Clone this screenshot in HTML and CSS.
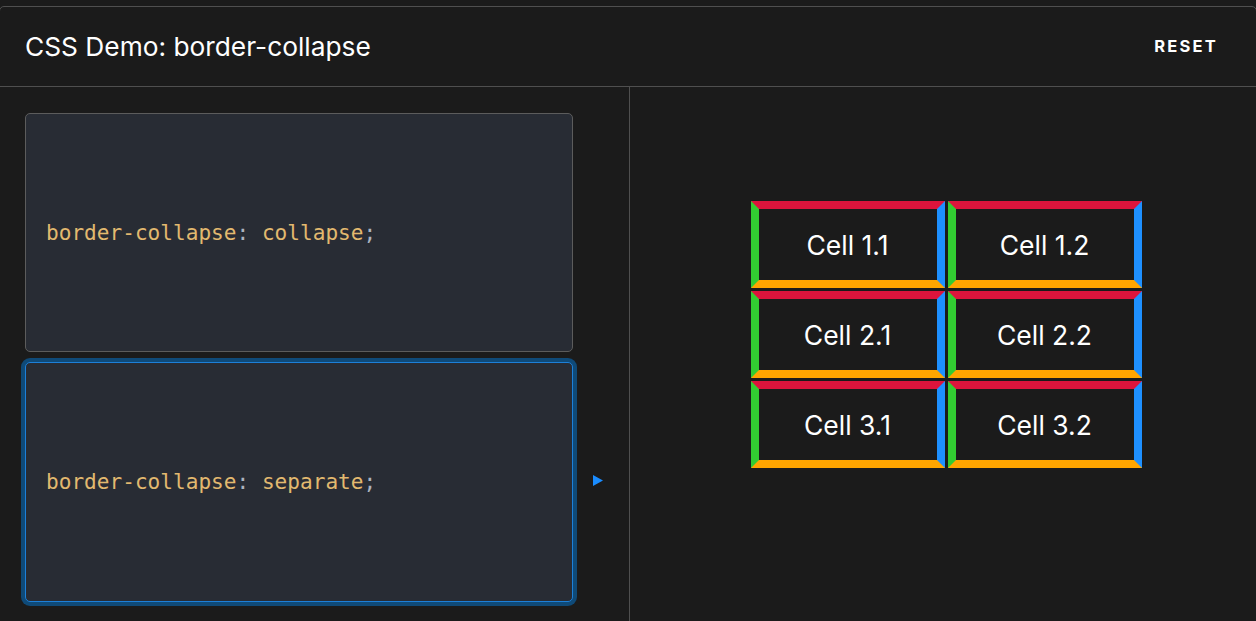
FILE: index.html
```html
<!DOCTYPE html>
<html lang="en">
<head>
<meta charset="utf-8">
<title>CSS Demo: border-collapse</title>
<link rel="stylesheet" href="styles.css">
</head>
<body>
<div class="frame">
  <header class="header">
    <h1 class="title">CSS Demo: border-collapse</h1>
    <button class="reset">RESET</button>
  </header>
  <div class="main">
    <div class="choices">
      <div class="row">
        <div class="card"><code><span class="tok">border-collapse</span><span class="punc">:</span> <span class="tok">collapse</span><span class="punc">;</span></code></div>
        <span class="slot"></span>
      </div>
      <div class="row">
        <div class="card selected"><code><span class="tok">border-collapse</span><span class="punc">:</span> <span class="tok">separate</span><span class="punc">;</span></code></div>
        <span class="slot"><svg class="play" width="10" height="11" viewBox="0 0 10 11"><polygon points="0,0 10,5.5 0,11" fill="#1a8cff"/></svg></span>
      </div>
    </div>
    <div class="output">
      <table class="demo">
        <tr><td>Cell 1.1</td><td>Cell 1.2</td></tr>
        <tr><td>Cell 2.1</td><td>Cell 2.2</td></tr>
        <tr><td>Cell 3.1</td><td>Cell 3.2</td></tr>
      </table>
    </div>
  </div>
</div>
</body>
</html>
```
FILE: styles.css
```css
html, body {
  margin: 0;
  padding: 0;
  background: #1b1b1b;
  overflow: hidden;
  height: 100%;
}
body {
  font-family: Inter, "Noto Sans", sans-serif;
  color: #ffffff;
}
.frame {
  margin: 6px -1px 0 -1px;
  border: 1px solid #4f4f4f;
  border-radius: 5px;
  height: 700px;
}
.header {
  height: 79px;
  border-bottom: 1px solid #4f4f4f;
  display: flex;
  align-items: center;
  justify-content: space-between;
  padding: 0 38px 0 25px;
}
.title {
  margin: 0 0 1px 0;
  font-size: 26.3px;
  font-weight: 400;
  color: #ffffff;
}
.reset {
  background: none;
  border: none;
  color: #ffffff;
  font-family: Inter, sans-serif;
  font-weight: 700;
  font-size: 16.5px;
  letter-spacing: 2.2px;
  padding: 0;
  margin-top: -2px;
}
.main {
  display: flex;
}
.choices {
  width: 604px;
  padding: 26px 0 0 25px;
  border-right: 1px solid #4f4f4f;
  display: flex;
  flex-direction: column;
  gap: 10px;
  height: 600px;
}
.row {
  display: flex;
  align-items: center;
  gap: 20px;
}
.card {
  box-sizing: border-box;
  width: 548px;
  height: 239px;
  background: #282c34;
  border: 1px solid #5c5c5c;
  border-radius: 5px;
  display: flex;
  align-items: center;
  padding: 0 0 1px 20px;
}
.card.selected {
  height: 240px;
  border-color: #1d80d8;
  box-shadow: 0 0 0 4px #0f4a78;
}
.card code {
  font-family: "DejaVu Sans Mono", "Liberation Mono", monospace;
  font-size: 21.1px;
  color: #e2b96f;
}
.tok { color: #e2b96f; }
.punc { color: #abb2bf; }
.slot {
  width: 10px;
  display: flex;
  margin-top: -3px;
}
.play { display: block; }
.output {
  flex: 1;
  display: flex;
  justify-content: center;
  align-items: flex-start;
  padding: 111px 0 0 6px;
}
.demo {
  border-collapse: separate;
  border-spacing: 3px;
}
.demo td {
  box-sizing: border-box;
  width: 194px;
  height: 87px;
  padding: 0;
  border: 8px solid;
  border-color: #dc143c #1e90ff #ffa500 #32cd32;
  text-align: center;
  vertical-align: middle;
  font-size: 26.5px;
  color: #ffffff;
}
```
